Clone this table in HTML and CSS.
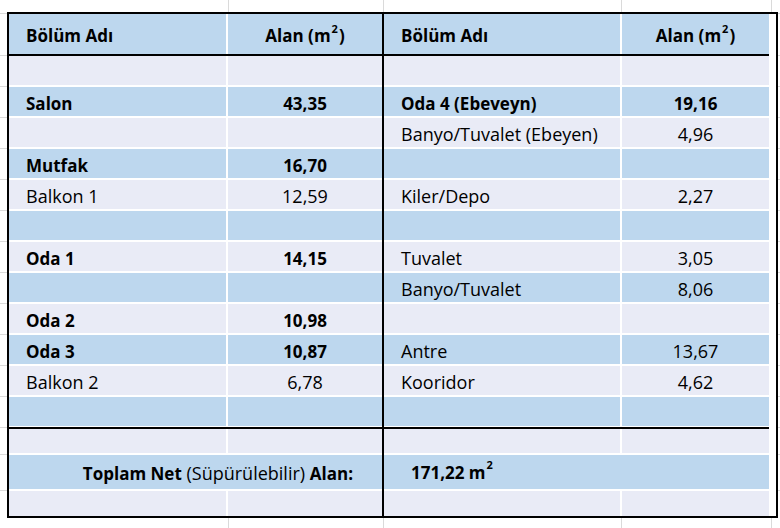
FILE: index.html
```html
<!DOCTYPE html>
<html lang="tr">
<head>
<meta charset="utf-8">
<title>Alan Tablosu</title>
<link rel="stylesheet" href="styles.css">
</head>
<body>
<div class="sheet">
  <div class="half half-left">
    <div class="head">
      <div class="c b">Bölüm Adı</div>
      <div class="c b num">Alan (m<sup>2</sup>)</div>
    </div>
    <div class="body">
      <div class="c lt"></div><div class="c lt num"></div>
      <div class="c bl b">Salon</div><div class="c bl b num">43,35</div>
      <div class="c lt"></div><div class="c lt num"></div>
      <div class="c bl b">Mutfak</div><div class="c bl b num">16,70</div>
      <div class="c lt">Balkon 1</div><div class="c lt num">12,59</div>
      <div class="c bl"></div><div class="c bl num"></div>
      <div class="c lt b">Oda 1</div><div class="c lt b num">14,15</div>
      <div class="c bl"></div><div class="c bl num"></div>
      <div class="c lt b">Oda 2</div><div class="c lt b num">10,98</div>
      <div class="c bl b">Oda 3</div><div class="c bl b num">10,87</div>
      <div class="c lt">Balkon 2</div><div class="c lt num">6,78</div>
      <div class="c bl"></div><div class="c bl num"></div>
    </div>
    <div class="foot">
      <div class="c lt r-a"></div><div class="c lt r-a"></div>
      <div class="c bl r-b span total-label"><span class="b">Toplam Net</span>&nbsp;(Süpürülebilir)&nbsp;<span class="b">Alan:</span></div>
      <div class="c lt r-c"></div><div class="c lt r-c"></div>
    </div>
  </div>
  <div class="half half-right">
    <div class="head">
      <div class="c b">Bölüm Adı</div>
      <div class="c b num">Alan (m<sup>2</sup>)</div>
    </div>
    <div class="body">
      <div class="c lt"></div><div class="c lt num"></div>
      <div class="c bl b">Oda 4 (Ebeveyn)</div><div class="c bl b num">19,16</div>
      <div class="c lt">Banyo/Tuvalet (Ebeyen)</div><div class="c lt num">4,96</div>
      <div class="c bl"></div><div class="c bl num"></div>
      <div class="c lt">Kiler/Depo</div><div class="c lt num">2,27</div>
      <div class="c bl"></div><div class="c bl num"></div>
      <div class="c lt">Tuvalet</div><div class="c lt num">3,05</div>
      <div class="c bl">Banyo/Tuvalet</div><div class="c bl num">8,06</div>
      <div class="c lt"></div><div class="c lt num"></div>
      <div class="c bl">Antre</div><div class="c bl num">13,67</div>
      <div class="c lt">Kooridor</div><div class="c lt num">4,62</div>
      <div class="c bl"></div><div class="c bl num"></div>
    </div>
    <div class="foot">
      <div class="c lt r-a"></div><div class="c lt r-a"></div>
      <div class="c bl r-b span total-value b">171,22 m<sup>2</sup></div>
      <div class="c lt r-c"></div><div class="c lt r-c"></div>
    </div>
  </div>
</div>
</body>
</html>
```
FILE: styles.css
```css
html, body {
  margin: 0;
  padding: 0;
}
body {
  width: 780px;
  height: 528px;
  overflow: hidden;
  background-color: #fff;
  background-image:
    linear-gradient(to right,
      transparent 0 228px, #dadada 228px 229px,
      transparent 229px 383px, #dadada 383px 384px,
      transparent 384px 621px, #dadada 621px 622px,
      transparent 622px 771px, #dadada 771px 772px,
      transparent 772px),
    repeating-linear-gradient(to bottom, transparent 0 30px, #dadada 30px 31px),
    linear-gradient(to bottom,
      transparent 0 13px, #dadada 13px 14px,
      transparent 14px 454px, #dadada 454px 455px,
      transparent 455px 490px, #dadada 490px 491px,
      transparent 491px);
  background-size: 100% 100%, 100% 403px, 100% 100%;
  background-position: 0 0, 0 25px, 0 0;
  background-repeat: no-repeat;
  font-family: "Open Sans", "Liberation Sans", sans-serif;
  font-size: 18px;
  color: #000;
}
.sheet {
  display: flex;
  margin: 12px 0 0 7px;
  width: 767px;
  border: 2px solid #000;
  background: #fff;
}
.half {
  display: flex;
  flex-direction: column;
}
.half-left {
  width: 373px;
  border-right: 2px solid #000;
}
.half-right {
  width: 385px;
}
.half-left .head,
.half-left .body,
.half-left .foot {
  grid-template-columns: 217px 154px;
}
.half-right .head,
.half-right .body,
.half-right .foot {
  grid-template-columns: 236px 147px;
}
.head {
  display: grid;
  column-gap: 2px;
  height: 40px;
  background: #fff;
  border-bottom: 2px solid #000;
}
.head .c {
  background: #bdd7ee;
}
.body {
  display: grid;
  gap: 2px;
  grid-auto-rows: 29px;
  background: #fff;
  padding-bottom: 1px;
}
.foot {
  display: grid;
  gap: 2px;
  grid-template-rows: 24px 34px 25px;
  border-top: 2px solid #000;
  background: #fff;
}
.c {
  display: flex;
  align-items: center;
  padding: 3px 0 0 17px;
  white-space: nowrap;
  box-sizing: border-box;
}
.num {
  justify-content: center;
  padding-left: 0;
}
.lt {
  background: #e9ebf6;
}
.bl {
  background: #bdd7ee;
}
.b {
  font-weight: 700;
  font-size: 17px;
}
.span {
  grid-column: 1 / -1;
}
.total-label {
  justify-content: flex-end;
  padding: 2px 29px 0 0;
}
.total-value {
  padding: 0 0 0 27px;
}
sup {
  font-size: 11px;
  line-height: 0;
  position: relative;
  top: -7px;
  vertical-align: baseline;
  margin: 0 1px;
}
```
